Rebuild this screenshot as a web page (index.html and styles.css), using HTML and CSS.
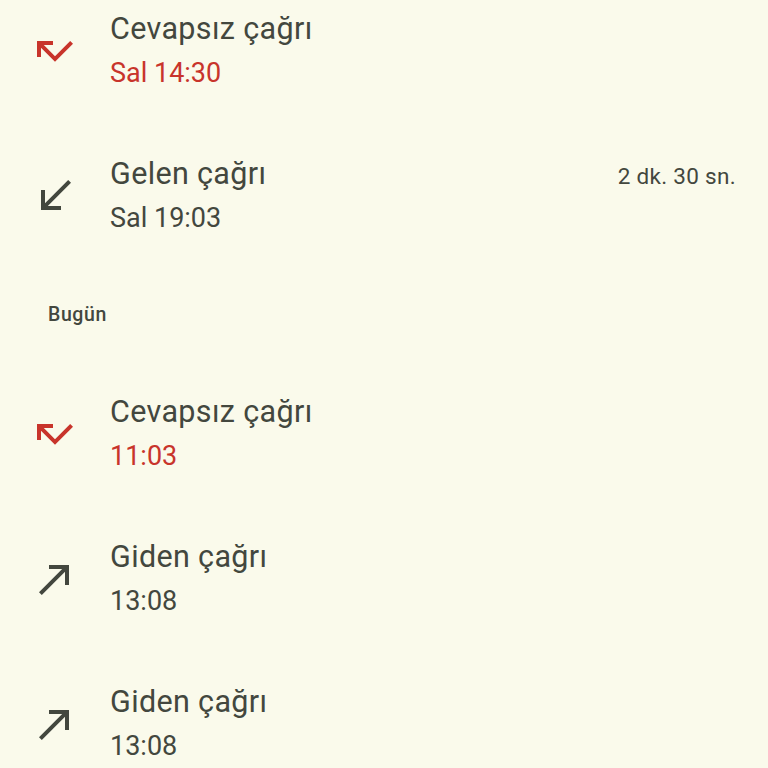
FILE: index.html
```html
<!DOCTYPE html>
<html lang="tr">
<head>
<meta charset="utf-8">
<link rel="stylesheet" href="styles.css">
</head>
<body>
<div class="log">
  <div class="row">
    <div class="icon">
      <svg viewBox="0 0 24 24" width="48" height="48"><path class="red" d="M19.59 7L12 14.59 6.41 9H11V7H3v8h2v-4.59l7 7 9-9z"/></svg>
    </div>
    <div class="text">
      <div class="title">Cevapsız çağrı</div>
      <div class="sub missed">Sal 14:30</div>
    </div>
  </div>
  <div class="row">
    <div class="icon">
      <svg viewBox="0 0 24 24" width="48" height="48"><path d="M20 5.41L18.59 4 7 15.59V9H5v10h10v-2H8.41z"/></svg>
    </div>
    <div class="text">
      <div class="title">Gelen çağrı</div>
      <div class="sub">Sal 19:03</div>
    </div>
    <div class="dur">2 dk. 30 sn.</div>
  </div>
  <div class="header">Bugün</div>
  <div class="row">
    <div class="icon">
      <svg viewBox="0 0 24 24" width="48" height="48"><path class="red" d="M19.59 7L12 14.59 6.41 9H11V7H3v8h2v-4.59l7 7 9-9z"/></svg>
    </div>
    <div class="text">
      <div class="title">Cevapsız çağrı</div>
      <div class="sub missed">11:03</div>
    </div>
  </div>
  <div class="row">
    <div class="icon">
      <svg viewBox="0 0 24 24" width="48" height="48"><path d="M9 5v2h6.59L4 18.59 5.41 20 17 8.41V15h2V5z"/></svg>
    </div>
    <div class="text">
      <div class="title">Giden çağrı</div>
      <div class="sub">13:08</div>
    </div>
  </div>
  <div class="row">
    <div class="icon">
      <svg viewBox="0 0 24 24" width="48" height="48"><path d="M9 5v2h6.59L4 18.59 5.41 20 17 8.41V15h2V5z"/></svg>
    </div>
    <div class="text">
      <div class="title">Giden çağrı</div>
      <div class="sub">13:08</div>
    </div>
  </div>
</div>
</body>
</html>
```
FILE: styles.css
```css
html, body {
  margin: 0;
  padding: 0;
  background: #fafaeb;
  overflow: hidden;
}
body {
  font-family: Roboto, "Liberation Sans", sans-serif;
  color: #43473e;
}
.log {
  margin-top: -22px;
  display: flex;
  flex-direction: column;
}
.row {
  display: flex;
  align-items: center;
  height: 145px;
  padding-right: 32px;
  box-sizing: border-box;
}
.icon {
  width: 48px;
  height: 48px;
  margin-left: 31px;
  margin-right: 31px;
  display: flex;
}
.icon svg path {
  fill: #43473e;
}
.icon svg path.red {
  fill: #c8342b;
}
.text {
  flex: 1;
  display: flex;
  flex-direction: column;
}
.title {
  font-size: 30.5px;
  line-height: 44px;
  letter-spacing: 0.35px;
}
.sub {
  font-size: 27px;
  line-height: 44px;
}
.sub.missed {
  color: #c8342b;
}
.dur {
  font-size: 22.5px;
  letter-spacing: 0.3px;
  align-self: flex-start;
  margin-top: 31px;
  line-height: 44px;
}
.header {
  height: 93px;
  display: flex;
  align-items: center;
  padding-left: 48px;
  font-size: 19.5px;
  font-weight: 500;
  letter-spacing: 0.6px;
}
```
